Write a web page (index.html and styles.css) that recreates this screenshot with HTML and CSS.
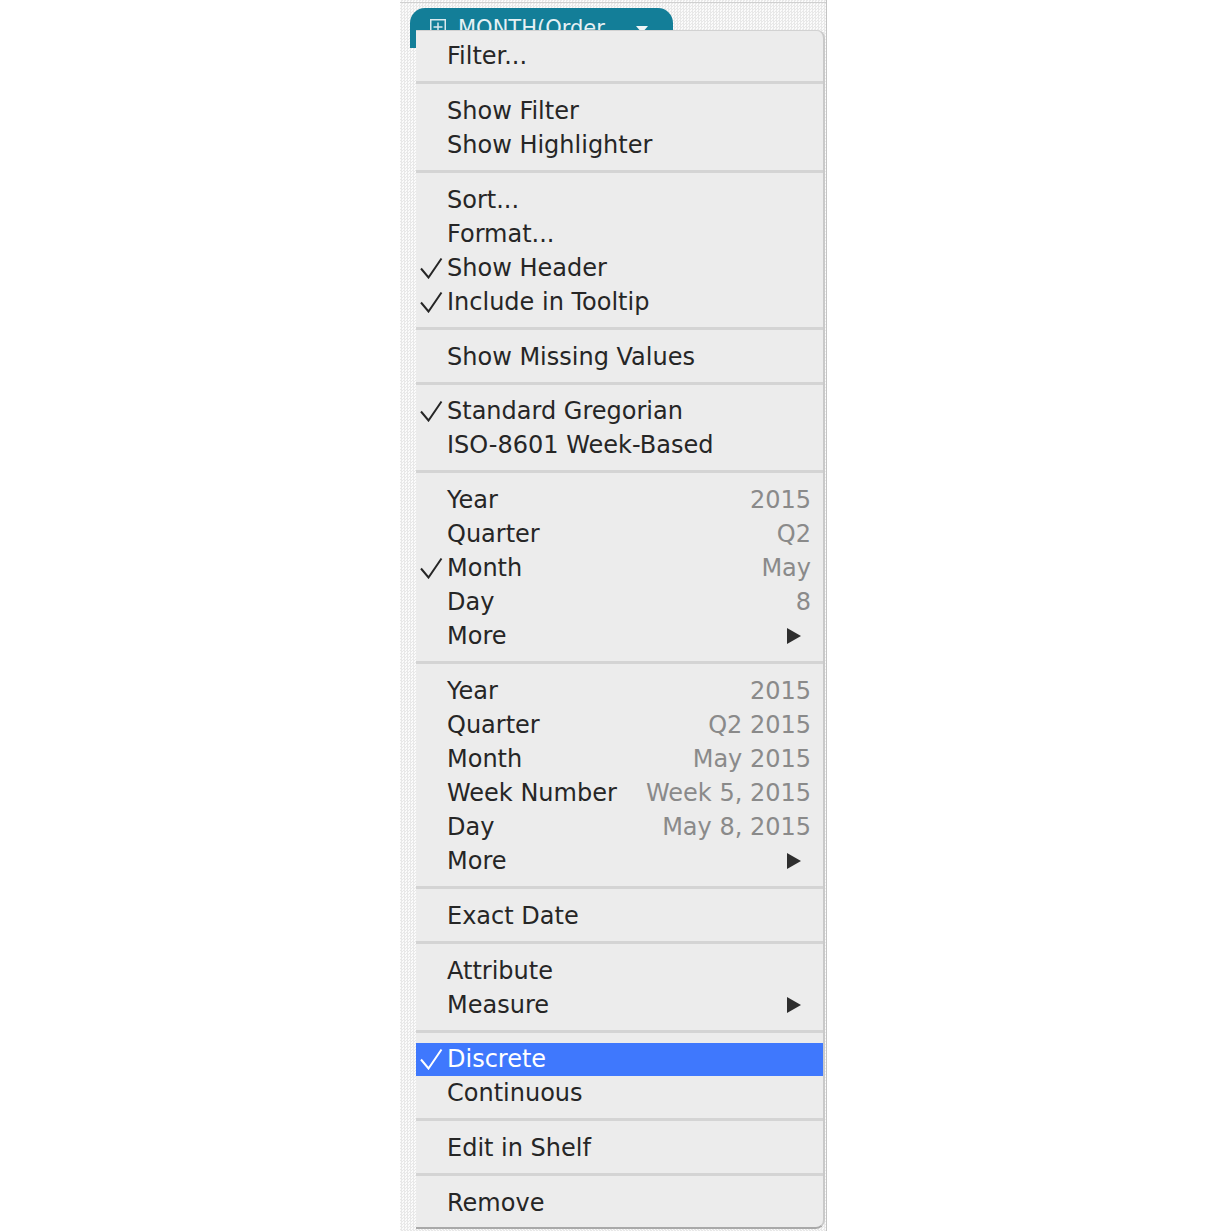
FILE: index.html
```html
<!DOCTYPE html>
<html lang="en">
<head>
<meta charset="utf-8">
<title>Context menu</title>
<link rel="stylesheet" href="styles.css">
</head>
<body>
<div class="app">
  <div class="shelf">
    <div class="pill">
      <svg class="pill-icon" width="16" height="16" viewBox="0 0 16 16"><rect x="0.75" y="0.75" width="14.5" height="14.5" fill="none" stroke="#dbe9ee" stroke-width="1.5"/><path d="M8 3.5v9M3.5 8h9" stroke="#dbe9ee" stroke-width="1.5"/></svg>
      <span class="pill-text">MONTH(Order</span>
      <svg class="pill-caret" width="12" height="8" viewBox="0 0 12 8"><path d="M0 0h12L6 7z" fill="#eef5f7"/></svg>
    </div>
  </div>
  <div class="menu">
    <div class="group first">
      <div class="row"><span class="chk"></span><span class="lbl">Filter...</span></div>
    </div>
    <div class="sep"></div>
    <div class="group">
      <div class="row"><span class="chk"></span><span class="lbl">Show Filter</span></div>
      <div class="row"><span class="chk"></span><span class="lbl">Show Highlighter</span></div>
    </div>
    <div class="sep"></div>
    <div class="group">
      <div class="row"><span class="chk"></span><span class="lbl">Sort...</span></div>
      <div class="row"><span class="chk"></span><span class="lbl">Format...</span></div>
      <div class="row"><span class="chk"><svg width="24" height="22" viewBox="0 0 24 22"><path d="M2 11.5L9.5 20.5L22.5 1.5" fill="none" stroke="currentColor" stroke-width="2"/></svg></span><span class="lbl">Show Header</span></div>
      <div class="row"><span class="chk"><svg width="24" height="22" viewBox="0 0 24 22"><path d="M2 11.5L9.5 20.5L22.5 1.5" fill="none" stroke="currentColor" stroke-width="2"/></svg></span><span class="lbl">Include in Tooltip</span></div>
    </div>
    <div class="sep"></div>
    <div class="group">
      <div class="row"><span class="chk"></span><span class="lbl">Show Missing Values</span></div>
    </div>
    <div class="sep"></div>
    <div class="group">
      <div class="row"><span class="chk"><svg width="24" height="22" viewBox="0 0 24 22"><path d="M2 11.5L9.5 20.5L22.5 1.5" fill="none" stroke="currentColor" stroke-width="2"/></svg></span><span class="lbl">Standard Gregorian</span></div>
      <div class="row"><span class="chk"></span><span class="lbl">ISO-8601 Week-Based</span></div>
    </div>
    <div class="sep"></div>
    <div class="group">
      <div class="row"><span class="chk"></span><span class="lbl">Year</span><span class="val">2015</span></div>
      <div class="row"><span class="chk"></span><span class="lbl">Quarter</span><span class="val">Q2</span></div>
      <div class="row"><span class="chk"><svg width="24" height="22" viewBox="0 0 24 22"><path d="M2 11.5L9.5 20.5L22.5 1.5" fill="none" stroke="currentColor" stroke-width="2"/></svg></span><span class="lbl">Month</span><span class="val">May</span></div>
      <div class="row"><span class="chk"></span><span class="lbl">Day</span><span class="val">8</span></div>
      <div class="row"><span class="chk"></span><span class="lbl">More</span><span class="val arrow"><svg width="14" height="16" viewBox="0 0 14 16"><path d="M0 0L14 8L0 16z" fill="#2e2e2e"/></svg></span></div>
    </div>
    <div class="sep"></div>
    <div class="group">
      <div class="row"><span class="chk"></span><span class="lbl">Year</span><span class="val">2015</span></div>
      <div class="row"><span class="chk"></span><span class="lbl">Quarter</span><span class="val">Q2 2015</span></div>
      <div class="row"><span class="chk"></span><span class="lbl">Month</span><span class="val">May 2015</span></div>
      <div class="row"><span class="chk"></span><span class="lbl">Week Number</span><span class="val">Week 5, 2015</span></div>
      <div class="row"><span class="chk"></span><span class="lbl">Day</span><span class="val">May 8, 2015</span></div>
      <div class="row"><span class="chk"></span><span class="lbl">More</span><span class="val arrow"><svg width="14" height="16" viewBox="0 0 14 16"><path d="M0 0L14 8L0 16z" fill="#2e2e2e"/></svg></span></div>
    </div>
    <div class="sep"></div>
    <div class="group">
      <div class="row"><span class="chk"></span><span class="lbl">Exact Date</span></div>
    </div>
    <div class="sep"></div>
    <div class="group">
      <div class="row"><span class="chk"></span><span class="lbl">Attribute</span></div>
      <div class="row"><span class="chk"></span><span class="lbl">Measure</span><span class="val arrow"><svg width="14" height="16" viewBox="0 0 14 16"><path d="M0 0L14 8L0 16z" fill="#2e2e2e"/></svg></span></div>
    </div>
    <div class="sep"></div>
    <div class="group">
      <div class="row active"><span class="chk"><svg width="24" height="22" viewBox="0 0 24 22"><path d="M2 11.5L9.5 20.5L22.5 1.5" fill="none" stroke="currentColor" stroke-width="2"/></svg></span><span class="lbl">Discrete</span></div>
      <div class="row"><span class="chk"></span><span class="lbl">Continuous</span></div>
    </div>
    <div class="sep"></div>
    <div class="group">
      <div class="row"><span class="chk"></span><span class="lbl">Edit in Shelf</span></div>
    </div>
    <div class="sep"></div>
    <div class="group last">
      <div class="row"><span class="chk"></span><span class="lbl">Remove</span></div>
    </div>
  </div>
</div>
</body>
</html>
```

FILE: styles.css
```css
html, body {
  margin: 0;
  padding: 0;
  background: #ffffff;
}

.app {
  margin-left: 400px;
  width: 426px;
  height: 1231px;
  overflow: hidden;
  border-right: 1px solid #c4c4c4;
  background: repeating-conic-gradient(#e8e8e8 0 25%, #fbfbfb 0 50%) 0 0 / 3px 3px;
  display: flex;
  flex-direction: column;
}

.shelf {
  height: 40px;
  border-top: 1px solid #d0d0d0;
  margin-top: 2px;
  padding: 5px 0 0 10px;
  box-sizing: border-box;
  flex: none;
}

.pill {
  width: 263px;
  height: 40px;
  background: #137e98;
  border-radius: 15px 15px 0 0;
  display: flex;
  align-items: flex-start;
  padding: 8px 0 0 20px;
  box-sizing: border-box;
  font-family: "DejaVu Sans", "Liberation Sans", sans-serif;
  font-size: 21px;
  color: #e6f1f4;
}

.pill-icon {
  flex: none;
  margin-top: 3px;
}

.pill-text {
  margin-left: 12px;
  line-height: 24px;
}

.pill-caret {
  flex: none;
  margin-left: auto;
  margin-right: 25px;
  margin-top: 10px;
}

.menu {
  position: relative;
  z-index: 1;
  margin-top: -12px;
  margin-left: 16px;
  width: 407px;
  background: #ececec;
  border-top: 1px solid #d2d2d2;
  border-right: 2px solid #c9c9c9;
  border-bottom: 2px solid #a9a9a9;
  border-radius: 0 8px 9px 0;
  font-family: "DejaVu Sans", "Liberation Sans", sans-serif;
  font-size: 24px;
  color: #262626;
}

.group {
  padding: 10px 0 8px;
}

.group.first {
  padding-top: 8px;
}

.group.last {
  padding-bottom: 7px;
}

.sep {
  height: 3px;
  background: #d4d4d4;
}

.row {
  height: 33.95px;
  display: grid;
  grid-template-columns: 31px 1fr auto;
  align-items: center;
  padding-right: 12px;
  white-space: nowrap;
}

.chk {
  display: flex;
  align-items: center;
  padding-left: 3px;
  color: #262626;
}

.lbl {
  line-height: 1;
}

.val {
  color: #8a8a8a;
  text-align: right;
  line-height: 1;
}

.val.arrow {
  display: flex;
  margin-right: 10px;
}

.row.active {
  background: #3f78fd;
  color: #ffffff;
}

.row.active .chk {
  color: #ffffff;
}
```
